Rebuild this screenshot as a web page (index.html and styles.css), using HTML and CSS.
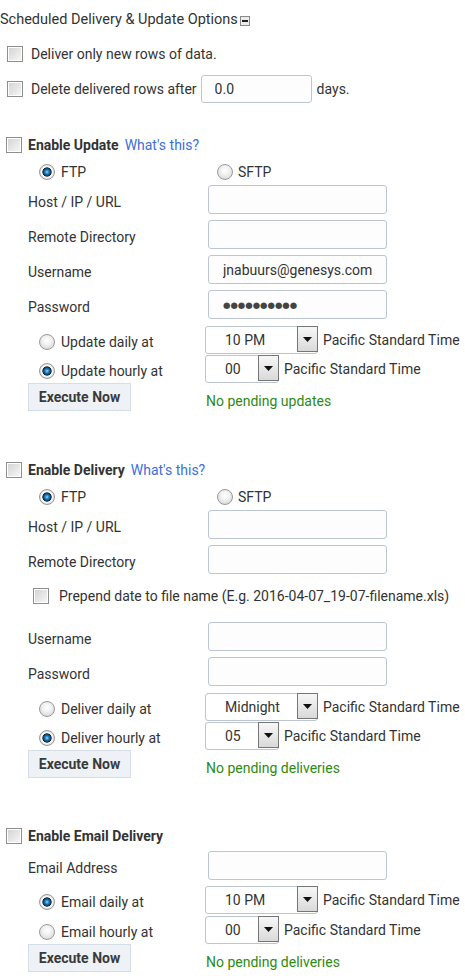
FILE: index.html
```html
<!DOCTYPE html>
<html lang="en">
<head>
<meta charset="utf-8">
<title>Scheduled Delivery &amp; Update Options</title>
<link rel="stylesheet" href="styles.css">
</head>
<body>
<div class="page">
  <div class="title">Scheduled Delivery &amp; Update Options
    <svg class="collapse" width="10" height="10" viewBox="0 0 10 10"><rect x="0.5" y="0.5" width="9" height="9" fill="#ececec" stroke="#8a8a8a"/><rect x="2" y="4" width="6" height="2" fill="#222"/></svg>
  </div>

  <label class="opt-row r1"><input type="checkbox" class="cb"><span>Deliver only new rows of data.</span></label>
  <div class="opt-row r2"><input type="checkbox" class="cb"><span>Delete delivered rows after</span><input class="txt days" value="0.0"><span class="unit">days.</span></div>

  <section class="sec s-update">
    <div class="sec-head"><input type="checkbox" class="cb"><b>Enable Update</b><a href="#">What's this?</a></div>
    <div class="proto">
      <label class="proto-opt"><input type="radio" class="rd" name="up-proto" checked>FTP</label>
      <label class="proto-opt"><input type="radio" class="rd" name="up-proto">SFTP</label>
    </div>
    <div class="field"><span class="lbl">Host / IP / URL</span><input class="txt wide"></div>
    <div class="field"><span class="lbl">Remote Directory</span><input class="txt wide"></div>
    <div class="field"><span class="lbl">Username</span><input class="txt wide" value="jnabuurs@genesys.com"></div>
    <div class="field"><span class="lbl">Password</span><div class="txt wide pw">●●●●●●●●●●</div></div>
    <div class="sched">
      <label class="sched-lbl"><input type="radio" class="rd" name="up-when">Update daily at</label>
      <div class="select daily"><span class="val">10 PM</span><span class="arrow"><svg width="9" height="5" viewBox="0 0 9 5"><path d="M0 0H9L4.5 5Z" fill="#111"/></svg></span></div>
      <span class="tz">Pacific Standard Time</span>
    </div>
    <div class="sched">
      <label class="sched-lbl"><input type="radio" class="rd" name="up-when" checked>Update hourly at</label>
      <div class="select hourly"><span class="val">00</span><span class="arrow"><svg width="9" height="5" viewBox="0 0 9 5"><path d="M0 0H9L4.5 5Z" fill="#111"/></svg></span></div>
      <span class="tz">Pacific Standard Time</span>
    </div>
    <div class="action"><span class="btn-col"><button class="btn" type="button">Execute Now</button></span><span class="status">No pending updates</span></div>
  </section>

  <section class="sec s-delivery">
    <div class="sec-head"><input type="checkbox" class="cb"><b>Enable Delivery</b><a href="#">What's this?</a></div>
    <div class="proto">
      <label class="proto-opt"><input type="radio" class="rd" name="dl-proto" checked>FTP</label>
      <label class="proto-opt"><input type="radio" class="rd" name="dl-proto">SFTP</label>
    </div>
    <div class="field"><span class="lbl">Host / IP / URL</span><input class="txt wide"></div>
    <div class="field"><span class="lbl">Remote Directory</span><input class="txt wide"></div>
    <label class="prepend"><input type="checkbox" class="cb"><span>Prepend date to file name (E.g. 2016-04-07_19-07-filename.xls)</span></label>
    <div class="field"><span class="lbl">Username</span><input class="txt wide"></div>
    <div class="field"><span class="lbl">Password</span><input class="txt wide" type="password"></div>
    <div class="sched">
      <label class="sched-lbl"><input type="radio" class="rd" name="dl-when">Deliver daily at</label>
      <div class="select daily"><span class="val">Midnight</span><span class="arrow"><svg width="9" height="5" viewBox="0 0 9 5"><path d="M0 0H9L4.5 5Z" fill="#111"/></svg></span></div>
      <span class="tz">Pacific Standard Time</span>
    </div>
    <div class="sched">
      <label class="sched-lbl"><input type="radio" class="rd" name="dl-when" checked>Deliver hourly at</label>
      <div class="select hourly"><span class="val">05</span><span class="arrow"><svg width="9" height="5" viewBox="0 0 9 5"><path d="M0 0H9L4.5 5Z" fill="#111"/></svg></span></div>
      <span class="tz">Pacific Standard Time</span>
    </div>
    <div class="action"><span class="btn-col"><button class="btn" type="button">Execute Now</button></span><span class="status">No pending deliveries</span></div>
  </section>

  <section class="sec s-email">
    <div class="sec-head"><input type="checkbox" class="cb"><b>Enable Email Delivery</b></div>
    <div class="field"><span class="lbl">Email Address</span><input class="txt wide"></div>
    <div class="sched">
      <label class="sched-lbl"><input type="radio" class="rd" name="em-when" checked>Email daily at</label>
      <div class="select daily"><span class="val">10 PM</span><span class="arrow"><svg width="9" height="5" viewBox="0 0 9 5"><path d="M0 0H9L4.5 5Z" fill="#111"/></svg></span></div>
      <span class="tz">Pacific Standard Time</span>
    </div>
    <div class="sched">
      <label class="sched-lbl"><input type="radio" class="rd" name="em-when">Email hourly at</label>
      <div class="select hourly"><span class="val">00</span><span class="arrow"><svg width="9" height="5" viewBox="0 0 9 5"><path d="M0 0H9L4.5 5Z" fill="#111"/></svg></span></div>
      <span class="tz">Pacific Standard Time</span>
    </div>
    <div class="action"><span class="btn-col"><button class="btn" type="button">Execute Now</button></span><span class="status">No pending deliveries</span></div>
  </section>
</div>
</body>
</html>
```

FILE: styles.css
```css
body {
  margin: 0;
  font-family: Roboto, "Liberation Sans", sans-serif;
  font-size: 14px;
  line-height: 20px;
  color: #333;
  background: #fff;
}

.title {
  display: flex;
  align-items: center;
  gap: 2px;
  margin-top: 10px;
  height: 20px;
  font-size: 14.5px;
}
.collapse { display: block; flex: none; margin-top: 1px; }

.opt-row {
  display: flex;
  align-items: center;
  padding-left: 7px;
}
.r1 { margin-top: 14px; height: 20px; gap: 8px; }
.r2 { margin-top: 10px; height: 30px; gap: 8px; }
.r2 .days { margin-left: -4px; }
.r2 .unit { margin-left: -3px; }

.cb {
  appearance: none;
  -webkit-appearance: none;
  margin: 0;
  width: 16px;
  height: 16px;
  box-sizing: border-box;
  border: 1px solid #8e8e8e;
  border-radius: 0;
  box-shadow: inset 0 0 0 1px #fff;
  background: linear-gradient(135deg, #d2d2d2, #f8f8f8);
  flex: none;
}

.rd {
  appearance: none;
  -webkit-appearance: none;
  margin: 0;
  width: 16px;
  height: 16px;
  box-sizing: border-box;
  border-radius: 50%;
  border: 1px solid #9a9a9a;
  background: radial-gradient(circle at 50% 40%, #ffffff 0, #f1f1f1 40%, #cdcdcd 100%);
  flex: none;
}
.rd:checked {
  background: radial-gradient(circle at 50% 50%, #8fd6fb 0, #2389cc 1.8px, #0c4a78 3.4px, #1a2632 4.3px, #ffffff 5px, #efefef 6px, #c9c9c9 8px);
}

.txt {
  box-sizing: border-box;
  height: 29px;
  border: 1px solid #bcc6d2;
  border-radius: 3px;
  background: #fdfdfd;
  font: inherit;
  color: #333;
  padding: 0 0 0 14px;
  margin: 0;
  outline: none;
}
.days { width: 111px; height: 28px; padding-left: 13px; }
.wide { width: 179px; flex: none; }
.pw {
  display: flex;
  align-items: center;
  font-family: "DejaVu Sans", sans-serif;
  font-size: 8.5px;
  color: #444;
}

.s-update { margin-top: 31px; }
.s-delivery { margin-top: 49px; }
.s-email { margin-top: 48px; }

.sec-head {
  display: flex;
  align-items: center;
  height: 20px;
  padding-left: 6px;
}
.sec-head .cb { margin-right: 6px; }
.sec-head b { font-weight: 700; color: #333; }
.sec-head a {
  color: #3d6fdc;
  margin-left: 6px;
  text-decoration: none;
}

.proto {
  display: flex;
  align-items: center;
  height: 20px;
  margin-top: 7px;
  padding-left: 39px;
}
.proto-opt { display: flex; align-items: center; gap: 6px; }
.proto-opt:first-child { width: 178px; }
.proto-opt + .proto-opt { gap: 5px; }

.field {
  display: flex;
  align-items: flex-start;
  padding-left: 28px;
  margin-top: 6px;
}
.proto + .field { margin-top: 3px; }
.sec-head + .field { margin-top: 5px; }
.field .lbl {
  width: 180px;
  flex: none;
  padding-top: 7px;
}

.prepend {
  display: flex;
  align-items: center;
  gap: 10px;
  height: 20px;
  padding-left: 33px;
  margin-top: 12px;
}
.prepend + .field { margin-top: 16px; }

.sched {
  display: flex;
  align-items: center;
  height: 28px;
  padding-left: 28px;
  margin-top: 1px;
}
.field + .sched { margin-top: 7px; }
.s-email .field + .sched { margin-top: 6px; }
.s-email .sched + .sched { margin-top: 2px; }
.sched-lbl {
  width: 177px;
  flex: none;
  box-sizing: border-box;
  display: flex;
  align-items: center;
  gap: 6px;
  padding-left: 11px;
  padding-top: 4px;
}

.select {
  display: flex;
  box-sizing: border-box;
  height: 28px;
  border: 1px solid #bcc6d2;
  border-radius: 3px;
  background: #fff;
  flex: none;
}
.select .val {
  flex: 1;
  padding-left: 19px;
  line-height: 26px;
}
.select .arrow {
  width: 21px;
  height: 26px;
  box-sizing: border-box;
  border: 1px solid #767676;
  background: linear-gradient(#f7f7f7, #d9d9d9);
  display: flex;
  align-items: center;
  justify-content: center;
  margin-top: -1px;
  margin-right: -1px;
  flex: none;
}
.daily { width: 113px; }
.hourly { width: 74px; }
.tz { margin-left: 5px; }

.action {
  display: flex;
  padding-left: 28px;
  margin-top: 0;
}
.btn-col { width: 177px; flex: none; }
.btn {
  display: block;
  width: 103px;
  height: 28px;
  box-sizing: border-box;
  border: 1px solid #d5dde6;
  border-radius: 0;
  background: #eef2f6;
  font-family: Roboto, "Liberation Sans", sans-serif;
  font-size: 14px;
  font-weight: 700;
  color: #3a3a3a;
  padding: 0;
  margin: 0;
}
.status {
  color: #2e8a10;
  padding-top: 8px;
  padding-left: 1px;
}
```
